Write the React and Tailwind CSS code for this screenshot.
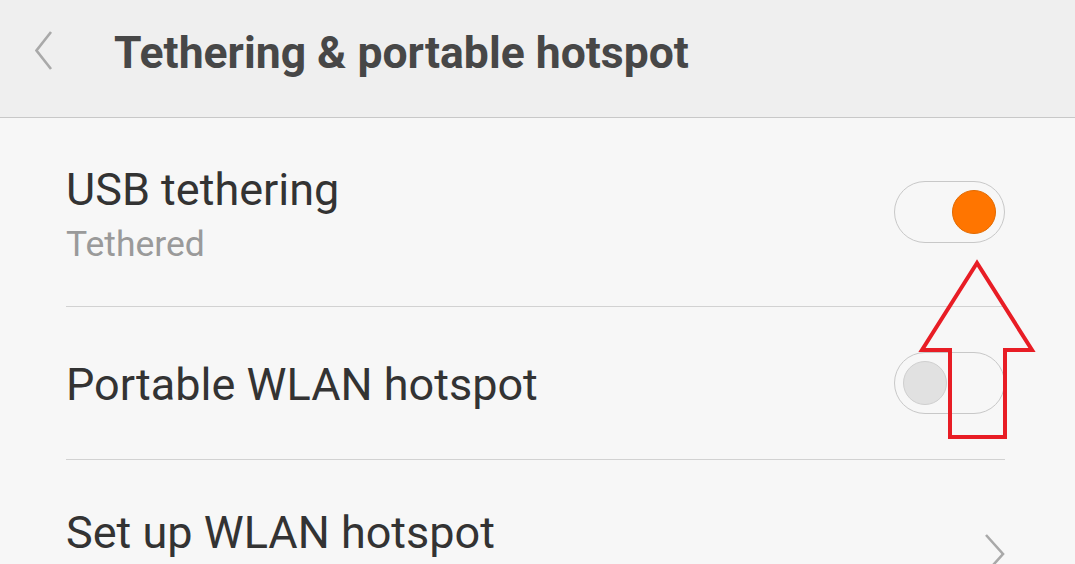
import React from "react";

function Toggle({ on }) {
  return (
    <div className="w-[111px] h-[62px] rounded-full border border-[#c8c8c8] flex items-center px-[8px] shrink-0" style={{ justifyContent: on ? "flex-end" : "flex-start" }}>
      {on ? (
        <div className="w-[44px] h-[44px] rounded-full bg-[#ff7500] border border-[#e26a00]" />
      ) : (
        <div className="w-[44px] h-[44px] rounded-full bg-[#e1e1e1] border border-[#cfcfcf]" />
      )}
    </div>
  );
}

export default function App() {
  return (
    <div className="relative w-[1075px] h-[564px] overflow-hidden bg-[#f7f7f7]" style={{ fontFamily: "Roboto, 'Noto Sans', sans-serif" }}>
      <div className="h-[118px] bg-[#efefef] border-b border-[#c8c8c8] flex items-start">
        <svg className="mt-[31px] ml-[35px]" width="20" height="40" viewBox="0 0 20 40">
          <polyline points="16,1 1.5,19.5 16,38" fill="none" stroke="#a9a9a9" strokeWidth="2.6" />
        </svg>
        <div className="ml-[59px] mt-[31px] text-[44.5px] leading-[44px] font-bold text-[#474747]">
          Tethering &amp; portable hotspot
        </div>
      </div>

      <div className="ml-[66px] mr-[70px]">
        <div className="relative h-[189px] border-b border-[#d2d2d2] flex items-start justify-between">
          <div className="flex flex-col pt-[49px]">
            <div className="text-[45px] leading-[45px] text-[#333333]">USB tethering</div>
            <div className="text-[35.5px] leading-[35px] text-[#9a9a9a] mt-[15px]">Tethered</div>
          </div>
          <div className="mt-[63px]">
            <Toggle on />
          </div>
        </div>
        <div className="h-[153px] border-b border-[#d2d2d2] flex items-start justify-between">
          <div className="text-[45px] leading-[45px] text-[#333333] mt-[55px]">Portable WLAN hotspot</div>
          <div className="mt-[45px]">
            <Toggle on={false} />
          </div>
        </div>
        <div className="h-[120px] flex items-start justify-between">
          <div className="text-[45px] leading-[45px] text-[#333333] mt-[50px]">Set up WLAN hotspot</div>
          <svg className="mt-[74px] mr-[-1px]" width="22" height="42" viewBox="0 0 22 42">
            <polyline points="2,1 19,20 2,39" fill="none" stroke="#a9a9a9" strokeWidth="2.6" />
          </svg>
        </div>
      </div>

      <svg className="absolute left-0 top-0 pointer-events-none" width="1075" height="564" viewBox="0 0 1075 564">
        <polygon points="977,263 922,350 950,350 950,437 1005,437 1005,350 1032,350" fill="none" stroke="#e81d25" strokeWidth="4" strokeLinejoin="miter" />
      </svg>
    </div>
  );
}
